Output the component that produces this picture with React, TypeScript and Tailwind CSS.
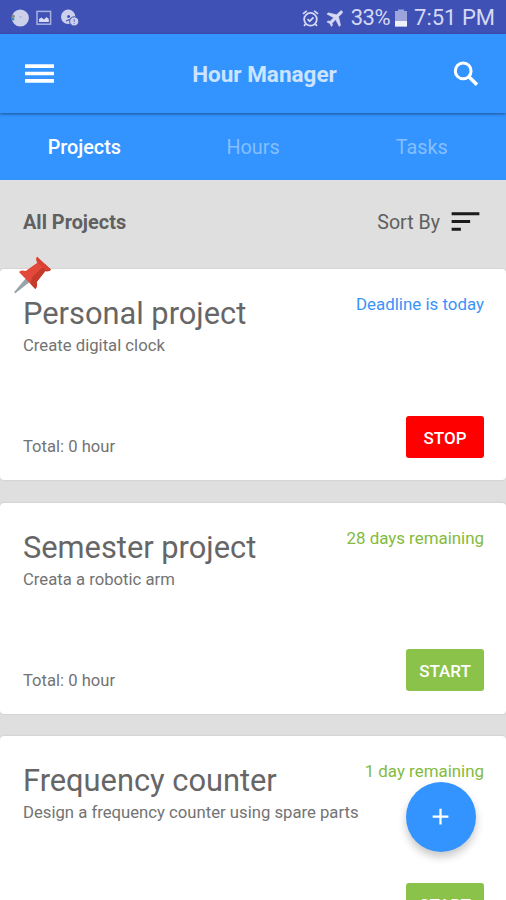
import { MdAdd, MdSort } from "react-icons/md";
import { clsx } from "clsx";

type Project = {
  id: number;
  title: string;
  description: string;
  deadline: string;
  dueToday?: boolean;
  running?: boolean;
  pinned?: boolean;
};

const projects: Project[] = [
  { id: 1, title: "Personal project", description: "Create digital clock", deadline: "Deadline is today", dueToday: true, running: true, pinned: true },
  { id: 2, title: "Semester project", description: "Creata a robotic arm", deadline: "28 days remaining" },
  { id: 3, title: "Frequency counter", description: "Design a frequency counter using spare parts", deadline: "1 day remaining" },
];

const tabs = ["Projects", "Hours", "Tasks"];

function PushPin() {
  return (
    <svg viewBox="0 0 114 114" className="absolute -top-[13px] left-[14px] h-[38px] w-[38px]">
      <path d="M38 64 L50 76 L4 112 L0 109 Z" fill="#98a4a8" />
      <path d="M69 2 L111 41 Q104 48 94 45 L68 78 Q72 90 64 99 L15 48 Q23 41 35 45 L70 20 Q64 10 69 2 Z" fill="#e2493a" />
      <path d="M111 41 Q104 48 94 45 L68 78 Q72 90 64 99 L50 84 L54 64 L86 34 L92 23 Z" fill="#c43a2b" />
      <path d="M69 2 L111 41 Q100 46 90 38 L73 22 Q64 10 69 2 Z" fill="#d94233" />
    </svg>
  );
}

function MenuIcon() {
  return (
    <svg viewBox="0 0 29 19" className="h-[19px] w-[29px]" fill="currentColor">
      <rect y="0.3" width="29" height="3.6" rx="0.5" />
      <rect y="7.7" width="29" height="3.6" rx="0.5" />
      <rect y="15.1" width="29" height="3.6" rx="0.5" />
    </svg>
  );
}

function SearchIcon() {
  return (
    <svg viewBox="0 0 26 26" className="mr-[25px] h-[26px] w-[26px] justify-self-end" fill="none" stroke="currentColor">
      <circle cx="10.2" cy="9.9" r="7.9" strokeWidth="3" />
      <path d="M15.6 15.4 L24 23.8" strokeWidth="3.6" />
    </svg>
  );
}

function AlarmIcon() {
  return (
    <svg viewBox="0 0 24 24" className="h-[19px] w-[19px]" fill="none" stroke="currentColor" strokeWidth="2.2">
      <circle cx="12" cy="13" r="8" />
      <path d="M2.5 6.2 L7.3 2.3 M21.5 6.2 L16.7 2.3" />
      <path d="M5.8 19.2 L3.8 21.4 M18.2 19.2 L20.2 21.4" />
      <path d="M8.2 12.8 L11 15.4 L15.8 10.6" />
    </svg>
  );
}

function PlaneIcon() {
  return (
    <svg viewBox="0 0 24 24" className="ml-[5px] h-[22px] w-[22px] rotate-45" fill="currentColor" stroke="currentColor" strokeWidth="0.6">
      <path d="M21 16v-2l-8-5V3.5c0-.83-.67-1.5-1.5-1.5S10 2.67 10 3.5V9l-8 5v2l8-2.5V19l-2 1.5V22l3.5-1 3.5 1v-1.5L13 19v-5.5l8 2.5z" />
    </svg>
  );
}

function StatusBar() {
  return (
    <div className="flex h-[34px] shrink-0 items-center justify-between bg-[#3f51b5] pl-[10px] pr-[11px] text-[#d5d9f3]">
      <div className="flex items-center pt-px">
        <svg viewBox="0 0 20 20" className="h-5 w-5">
          <circle cx="10.3" cy="10" r="8.6" fill="#ccd0e8" />
          <circle cx="3.2" cy="8.2" r="1.6" fill="#8b877c" />
          <circle cx="3" cy="11" r="1.5" fill="#3d8fb5" />
          <circle cx="10.5" cy="9" r="0.9" fill="#adb3d6" />
        </svg>
        <svg viewBox="0 0 16 16" className="ml-[6px] h-4 w-4">
          <rect x="1" y="1.4" width="13.6" height="12.8" fill="none" stroke="#a8b0df" strokeWidth="1.5" />
          <path d="M3 12 V9 L5.5 7.5 L8 9.5 L10.5 7 L12.8 9 V12 Z" fill="#d9dcf5" />
        </svg>
        <svg viewBox="0 0 20 20" className="ml-[8px] h-5 w-5">
          <circle cx="8.2" cy="8.8" r="7.2" fill="#ccd0ec" />
          <circle cx="8.6" cy="8.4" r="1.5" fill="#3f51b5" />
          <path d="M6 13 L11 11" stroke="#3f51b5" strokeWidth="1.3" />
          <circle cx="14.2" cy="13.4" r="4.6" fill="#ccd0ec" stroke="#3f51b5" strokeWidth="1" />
          <path d="M14.2 11 V14 M14.2 15 V16" stroke="#7781c8" strokeWidth="1.2" />
        </svg>
      </div>
      <div className="flex items-center pt-[2px]">
        <AlarmIcon />
        <PlaneIcon />
        <span className="ml-[4px] text-[22px] leading-[32px] tracking-[-0.5px]">33%</span>
        <svg viewBox="0 0 12 18" className="ml-[5px] h-[18px] w-[12px]">
          <path d="M3 0.5 H9 V2 H12 V17.5 H0 V2 H3 Z" fill="#9ba4db" />
          <path d="M0 12 H12 V17.5 H0 Z" fill="#eef0fc" />
        </svg>
        <span className="ml-[7px] text-[22px] leading-[32px]">7:51 PM</span>
      </div>
    </div>
  );
}

function ProjectCard({ project }: { project: Project }) {
  return (
    <article className="relative flex h-[211px] shrink-0 flex-col justify-between rounded-[4px] bg-white px-[23px] pb-[22px] pt-[26px] shadow-[0_0_2px_rgba(0,0,0,0.15)]">
      {project.pinned && <PushPin />}
      <div className="flex items-start justify-between">
        <div className="w-0 whitespace-nowrap">
          <h2 className="text-[30.8px] leading-[38px] text-[#666]">{project.title}</h2>
          <p className="text-[16.7px] leading-[26px] text-[#737373]">{project.description}</p>
        </div>
        <span className={clsx("-mr-px whitespace-nowrap text-[16.9px] leading-[18px]", project.dueToday ? "text-[#3a93f8]" : "text-[#83bb3d]")}>
          {project.deadline}
        </span>
      </div>
      <div className="flex items-end justify-between">
        <span className="text-[16.6px] leading-[22px] text-[#737373]">Total: 0 hour</span>
        <button
          className={clsx(
            "-mr-px mb-[0.5px] h-[42px] w-[78px] rounded-[3px] pt-[3px] text-[17px] font-medium text-white",
            project.running ? "bg-[#fe0000]" : "bg-[#8bc34a]",
          )}
        >
          {project.running ? "STOP" : "START"}
        </button>
      </div>
    </article>
  );
}

export default function App() {
  return (
    <div className="relative flex h-[900px] w-[506px] flex-col overflow-hidden bg-[#dfdfdf] font-['Roboto',sans-serif]">
      <StatusBar />
      <header className="z-10 grid h-[79px] shrink-0 grid-cols-[1fr_auto_1fr] items-center bg-[#3394ff] pl-[25px] pr-[2px] text-white shadow-[0_1px_3px_rgba(0,0,0,0.45)]">
        <MenuIcon />
        <h1 className="pt-[3px] text-[22.5px] font-bold text-[#cce4ff]">Hour Manager</h1>
        <SearchIcon />
      </header>
      <nav className="grid h-[67px] shrink-0 grid-cols-3 bg-[#3394ff]">
        {tabs.map((tab, i) => (
          <button key={tab} className={clsx("pt-[3px] text-[19.8px]", i === 0 ? "font-medium text-white" : "text-[#85bfff]")}>
            {tab}
          </button>
        ))}
      </nav>
      <div className="flex h-[89.4px] shrink-0 items-center justify-between pb-[3px] pl-[23px] pr-[22px]">
        <span className="text-[19.9px] font-bold text-[#606060]">All Projects</span>
        <button className="flex items-center gap-[7px] text-[19.6px] text-[#606060]">
          Sort By
          <MdSort className="mb-[4px] h-[37px] w-[37px] text-[#1b1b1b]" />
        </button>
      </div>
      <main className="flex flex-col gap-[22.5px]">
        {projects.map((project) => (
          <ProjectCard key={project.id} project={project} />
        ))}
      </main>
      <button className="absolute left-[405.5px] top-[781.5px] grid h-[70.5px] w-[70.5px] place-items-center rounded-full bg-[#3394ff] text-white shadow-[0_5px_9px_rgba(0,0,0,0.22)]">
        <MdAdd className="h-[27px] w-[27px]" />
      </button>
    </div>
  );
}
